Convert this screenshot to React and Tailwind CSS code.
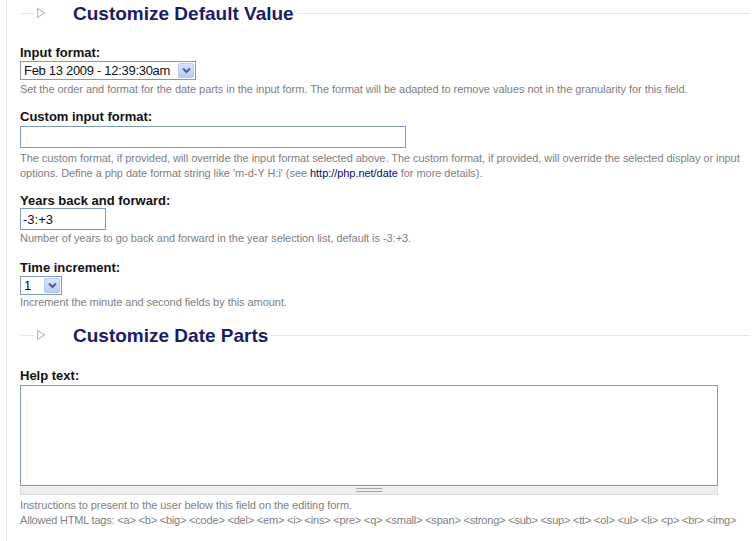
import React from "react";

const FONT = { fontFamily: '"Liberation Sans", Arial, sans-serif' };

function Legend({ title }) {
  return (
    <div className="flex items-center h-[26px]">
      <span className="w-[14px] h-px bg-[#dfe6ee]" />
      <svg width="10" height="12" viewBox="0 0 10 12" className="ml-[2px]">
        <path d="M1.5 1.5 L8.5 6 L1.5 10.5 Z" fill="none" stroke="#b9bec6" strokeWidth="1.2" />
      </svg>
      <h2 className="ml-[27px] text-[19px] font-bold text-[#1b1b6a] leading-none">{title}</h2>
      <span className="flex-1 h-px bg-[#dfe6ee] ml-[3px]" />
    </div>
  );
}

function Label({ children }) {
  return <div className="text-[13px] font-bold text-[#111] leading-[15px]">{children}</div>;
}

function Desc({ children, className = "tracking-[-0.05px]" }) {
  return <div className={`text-[11px] text-[#808080] leading-[15px] ${className}`}>{children}</div>;
}

function Select({ value, width }) {
  return (
    <div className={`flex items-center justify-between h-[19px] border border-[#7f9db9] bg-white ${width}`}>
      <span className="pl-[3px] text-[13px] tracking-[-0.3px] text-[#111] leading-none whitespace-nowrap">{value}</span>
      <span className="mr-px w-[16px] h-[15px] shrink-0 rounded-[2px] border border-[#b5c8f3] bg-gradient-to-b from-[#d8e4fd] to-[#b7ccf8] flex items-center justify-center">
        <svg width="9" height="7" viewBox="0 0 9 7">
          <path d="M1 1.5 L4.5 5 L8 1.5" fill="none" stroke="#4d5f8a" strokeWidth="2" />
        </svg>
      </span>
    </div>
  );
}

export default function App() {
  return (
    <div className="w-[755px] h-[541px] bg-white overflow-hidden pl-[6px]" style={FONT}>
      <div className="h-full border-l border-[#e3e8ee] pl-[13px] pr-[5px]">
        <Legend title="Customize Default Value" />

        <div className="mt-[19px]">
          <Label>Input format:</Label>
          <div className="mt-px">
            <Select value="Feb 13 2009 - 12:39:30am" width="w-[176px]" />
          </div>
          <Desc className="mt-[2px] tracking-[-0.05px]">
            Set the order and format for the date parts in the input form. The format will be adapted to remove values not in the granularity for this field.
          </Desc>
        </div>

        <div className="mt-[12px]">
          <Label>Custom input format:</Label>
          <input className="block mt-[2px] w-[386px] h-[22px] border border-[#7f9db9] outline-none" readOnly />
          <Desc className="mt-[3px] tracking-[-0.05px]">
            The custom format, if provided, will override the input format selected above. The custom format, if provided, will override the selected display or input options. Define a php date format string like 'm-d-Y H:i' (see{" "}
            <a className="text-[#0a0a6a]">http://php.net/date</a> for more details).
          </Desc>
        </div>

        <div className="mt-[12px]">
          <Label>Years back and forward:</Label>
          <input
            className="block w-[86px] h-[22px] border border-[#7f9db9] outline-none text-[13px] pl-[2px] text-[#111]"
            defaultValue="-3:+3"
            readOnly
          />
          <Desc className="mt-[1px] tracking-[-0.05px]">Number of years to go back and forward in the year selection list, default is -3:+3.</Desc>
        </div>

        <div className="mt-[14px]">
          <Label>Time increment:</Label>
          <div className="mt-px">
            <Select value="1" width="w-[42px]" />
          </div>
          <Desc>Increment the minute and second fields by this amount.</Desc>
        </div>

        <div className="mt-[12px]">
          <Legend title="Customize Date Parts" />
        </div>

        <div className="mt-[20px]">
          <Label>Help text:</Label>
          <div className="mt-[2px] w-[698px]">
            <textarea className="block w-full h-[101px] border border-[#7f9db9] outline-none resize-none" readOnly />
            <div className="h-[9px] bg-[#eeeeee] border border-t-0 border-[#dddddd] flex flex-col items-center justify-center gap-[2px]">
              <span className="w-[26px] h-px bg-[#a8a8a8]" />
              <span className="w-[26px] h-px bg-[#a8a8a8]" />
            </div>
          </div>
          <Desc className="mt-[3px] tracking-[-0.05px]">Instructions to present to the user below this field on the editing form.</Desc>
          <Desc className="whitespace-nowrap tracking-[-0.2px]">
            Allowed HTML tags: &lt;a&gt; &lt;b&gt; &lt;big&gt; &lt;code&gt; &lt;del&gt; &lt;em&gt; &lt;i&gt; &lt;ins&gt; &lt;pre&gt; &lt;q&gt; &lt;small&gt; &lt;span&gt; &lt;strong&gt; &lt;sub&gt; &lt;sup&gt; &lt;tt&gt; &lt;ol&gt; &lt;ul&gt; &lt;li&gt; &lt;p&gt; &lt;br&gt; &lt;img&gt;
          </Desc>
        </div>
      </div>
    </div>
  );
}
